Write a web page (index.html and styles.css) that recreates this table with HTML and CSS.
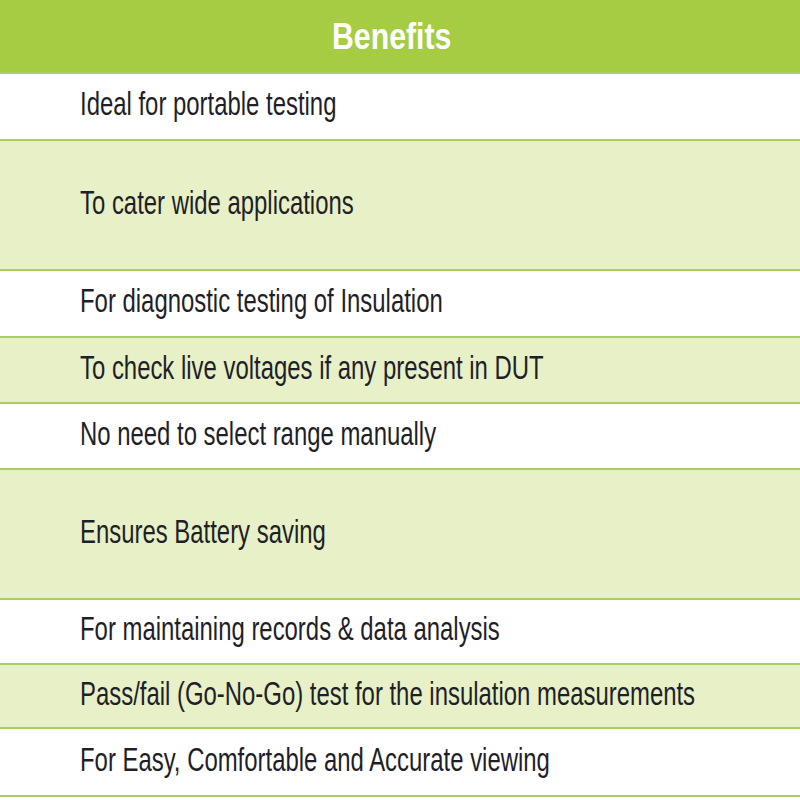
FILE: index.html
```html
<!DOCTYPE html>
<html>
<head>
<meta charset="utf-8">
<link rel="stylesheet" href="styles.css">
</head>
<body>
<div class="table">
  <div class="head"><span class="txt">Benefits</span></div>
  <div class="row white h67"><span class="txt">Ideal for portable testing</span></div>
  <div class="row green h130"><span class="txt">To cater wide applications</span></div>
  <div class="row white h67"><span class="txt">For diagnostic testing of Insulation</span></div>
  <div class="row green h66"><span class="txt">To check live voltages if any present in DUT</span></div>
  <div class="row white h66"><span class="txt">No need to select range manually</span></div>
  <div class="row green h130"><span class="txt">Ensures Battery saving</span></div>
  <div class="row white h65"><span class="txt">For maintaining records &amp; data analysis</span></div>
  <div class="row green h64"><span class="txt">Pass/fail (Go-No-Go) test for the insulation measurements</span></div>
  <div class="row white h68"><span class="txt">For Easy, Comfortable and Accurate viewing</span></div>
  <div class="row white tail"></div>
</div>
</body>
</html>
```
FILE: styles.css
```css
html, body {
  margin: 0;
  padding: 0;
  background: #ffffff;
}
.table {
  width: 800px;
  height: 800px;
  display: flex;
  flex-direction: column;
  overflow: hidden;
  font-family: "Liberation Sans", Arial, sans-serif;
}
.txt {
  display: inline-block;
  white-space: nowrap;
  transform: scaleX(0.703);
  transform-origin: left center;
}
.head {
  height: 72px;
  flex: none;
  background: #a6cc43;
  color: #ffffff;
  font-weight: bold;
  font-size: 36px;
  display: flex;
  align-items: center;
  padding-left: 332px;
  padding-top: 2px;
  box-sizing: border-box;
}
.head .txt {
  transform: scaleX(0.84);
}
.row {
  flex: none;
  box-sizing: border-box;
  display: flex;
  align-items: center;
  padding-left: 80px;
  padding-bottom: 6px;
  border-top: 2px solid #a9cf5e;
  color: #1f1f28;
  font-size: 34px;
}
.white { background: #ffffff; }
.green { background: #e7f0c6; }
.h67 { height: 67px; }
.h130 { height: 130px; }
.h66 { height: 66px; }
.h65 { height: 65px; }
.h64 { height: 64px; }
.h68 { height: 68px; }
.tail { flex: 1; }
```
